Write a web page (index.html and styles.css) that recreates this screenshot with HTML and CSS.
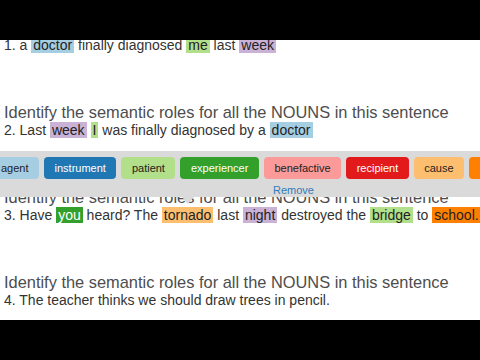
FILE: index.html
```html
<!DOCTYPE html>
<html>
<head>
<meta charset="utf-8">
<link rel="stylesheet" href="styles.css">
</head>
<body>
<div class="frame">
  <div class="content">
    <section class="item">
      <h2 class="q">Identify the semantic roles for all the NOUNS in this sentence</h2>
      <p class="s">1. a <span class="hl agent">doctor</span> finally diagnosed <span class="hl patient">me</span> last <span class="hl time">week</span></p>
    </section>
    <section class="item">
      <h2 class="q">Identify the semantic roles for all the NOUNS in this sentence</h2>
      <p class="s">2. Last <span class="hl time">week</span> <span class="hl patient">I</span> was finally diagnosed by a <span class="hl agent">doctor</span></p>
    </section>
    <section class="item">
      <h2 class="q">Identify the semantic roles for all the NOUNS in this sentence</h2>
      <p class="s">3. Have <span class="hl experiencer">you</span> heard? The <span class="hl cause">tornado</span> last <span class="hl time">night</span> destroyed the <span class="hl patient">bridge</span> to <span class="hl location">school.</span></p>
    </section>
    <section class="item">
      <h2 class="q">Identify the semantic roles for all the NOUNS in this sentence</h2>
      <p class="s">4. The teacher thinks we should draw trees in pencil.</p>
    </section>
  </div>
  <div class="popover">
    <div class="roles">
      <span class="role agent">agent</span>
      <span class="role instrument">instrument</span>
      <span class="role patient">patient</span>
      <span class="role experiencer">experiencer</span>
      <span class="role benefactive">benefactive</span>
      <span class="role recipient">recipient</span>
      <span class="role cause">cause</span>
      <span class="role location">location</span>
    </div>
    <div class="remove-row"><a class="remove">Remove</a></div>
    <div class="arrow"></div>
  </div>
</div>
</body>
</html>
```
FILE: styles.css
```css
html, body {
  margin: 0;
  padding: 0;
  background: #000;
}
body {
  width: 480px;
  height: 360px;
  overflow: hidden;
  font-family: "Liberation Sans", Arial, sans-serif;
}
.frame {
  position: relative;
  margin-top: 40px;
  height: 280px;
  background: #fff;
  overflow: hidden;
}
.content {
  margin-top: -22px;
  padding-left: 4px;
}
.item {
  margin: 0 0 48px 0;
}
.q {
  margin: 0;
  font-size: 16.4px;
  font-weight: normal;
  line-height: 18px;
  color: #4d4d4d;
  white-space: nowrap;
}
.s {
  margin: 0;
  font-size: 14px;
  line-height: 19px;
  color: #333;
  white-space: nowrap;
}
.hl {
  padding: 0 2px;
}
.agent { background: #a6cee3; color: #222; }
.instrument { background: #1f78b4; color: #fff; }
.patient { background: #b2df8a; color: #222; }
.experiencer { background: #33a02c; color: #fff; }
.benefactive { background: #fb9a99; color: #222; }
.recipient { background: #e31a1c; color: #fff; }
.cause { background: #fdbf6f; color: #222; }
.location { background: #ff7f00; color: #222; }
.time { background: #cab2d6; color: #222; }

.popover {
  position: absolute;
  top: 111px;
  left: 0;
  right: 0;
  height: 46px;
  background: #dadada;
}
.roles {
  display: flex;
  gap: 5px;
  margin-left: -9.5px;
  padding-top: 6px;
  white-space: nowrap;
}
.role {
  flex-shrink: 0;
  height: 22px;
  line-height: 22px;
  padding: 0 10.5px;
  border-radius: 4px;
  font-size: 11px;
}
.remove-row {
  margin-top: 3px;
  padding-left: 273px;
  line-height: 14px;
}
.remove {
  font-size: 11px;
  color: #337ab7;
}
.arrow {
  position: absolute;
  top: 100%;
  left: 182px;
  width: 0;
  height: 0;
  border-left: 6px solid transparent;
  border-right: 6px solid transparent;
  border-top: 7px solid #dadada;
}
```
